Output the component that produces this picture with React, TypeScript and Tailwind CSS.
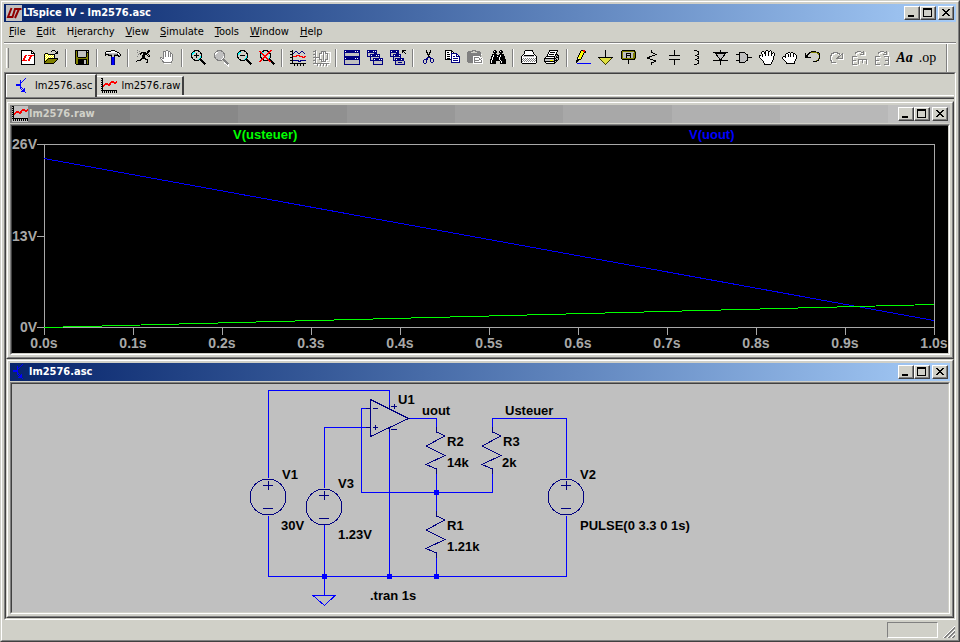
import { ReactNode } from 'react';

const palette: Record<string, string> = {
  k: '#000000',
  w: '#ffffff',
  g: '#808080',
  l: '#c0c0c0',
  r: '#ff0000',
  b: '#0000ff',
  n: '#000080',
  o: '#808000',
  y: '#ffff00',
  c: '#00ffff'
};

function Pixels({ rows }: { rows: string[] }) {
  return (
    <svg viewBox="0 0 16 16" className="block h-4 w-4 shrink-0" shapeRendering="crispEdges" aria-hidden="true">
      {rows.map((row, y) =>
        row.split('').map((ch, x) => (palette[ch] ? <rect key={`${x}-${y}`} x={x} y={y} width={1} height={1} fill={palette[ch]} /> : null))
      )}
    </svg>
  );
}

function Draw({ children }: { children: ReactNode }) {
  return (
    <svg viewBox="0 0 16 16" className="block h-4 w-4 shrink-0 overflow-visible" fill="none" stroke="#000" shapeRendering="crispEdges" aria-hidden="true">
      {children}
    </svg>
  );
}

const fileNew = [
  '.kkkkkkkkkkk....',
  '.kwwwwwwwwwkk...',
  '.kwwwwwwwwwkwk..',
  '.kwwwwwwwwwkkkk.',
  '.kwwwwwwwwwwwwk.',
  '.kwwwrrwrrrrrrk.',
  '.kwwrrwwwwrrwwk.',
  '.kwwrrwwwrrwwwk.',
  '.kwrrwwwwrrwwwk.',
  '.kwrrwwwrrwwwwk.',
  '.krrrrrwrrwwwwk.',
  '.kwwwwwwwwwwwwk.',
  '.kwwwwwwwwwwwwk.',
  '.kwwwwwwwwwwwwk.',
  '.kkkkkkkkkkkkkk.'
];

const fileOpen = [
  '.........kkk....',
  '........k...k.k.',
  '.............kk.',
  '..kkk.......kkk.',
  '.kywykkkkkkk....',
  '.kwywywywywk....',
  '.kywywywywyk....',
  '.kwywywywywk....',
  '.kywykkkkkkkkkk.',
  '.kwykoooooooook.',
  '.kykoooooooook..',
  '.kkoooooooook...',
  '.koooooooook....',
  '.kkkkkkkkkk.....'
];

const save = [
  '.kkkkkkkkkkkkkk.',
  '.kokllllllllklk.',
  '.kokllllllllkkk.',
  '.kokllllllllkok.',
  '.kokllllllllkok.',
  '.kokllllllllkok.',
  '.kokllllllllkok.',
  '.kookkkkkkkkook.',
  '.kooooooooooook.',
  '.kookkkkkkkkkok.',
  '.kookkkkkkllkok.',
  '.kookkkkkkllkok.',
  '.kookkkkkkllkok.',
  '.kookkkkkkllkok.',
  '..kkkkkkkkkkkkk.'
];

const hammer = [
  '......kkkk......',
  '.kkkkkwwwwkk....',
  'kwwwwwwwwwwwkk..',
  'kllllllllllllwk.',
  'kkkkgggllgggkwlk',
  'k..kkkkllkkkkklk',
  '......kllk...kk.',
  '......nbbn......',
  '......nbbn......',
  '......nbbn......',
  '......nbbn......',
  '......nbbn......',
  '......nbbn......',
  '......nbbn......',
  '......nbbn......'
];

const run = [
  '.g..........kk..',
  '...g.......kkk..',
  '.g...kkkkk.kk...',
  '...gkk.kkkkk....',
  '..g.k..kkkk.k...',
  '......kkk..k.k..',
  '.g....kkk...kk..',
  '......kkk.......',
  '.....kkkkk......',
  '....kk...kkk....',
  '.kkkk......k....',
  'k..........k....',
  '..........kk....'
];

const stop = [
  '.......gg.......',
  '....gggwwgg.....',
  '....gwgwwgwg....',
  '....gwgwwgwgg...',
  '....gwgwwgwgwg..',
  '....gwgwwgwgwg..',
  '....gwgwwgwgwg..',
  '.gg.gwwwwwwwwg..',
  '.gwggwwwwwwwwg..',
  '..gwwwwwwwwwwg..',
  '...gwwwwwwwwwg..',
  '...ggwwwwwwwg...',
  '....ggggggggg...',
  '.....wwwwwww....'
];

const cut = [
  '.....k...k......',
  '.....k...k......',
  '.....kk.kk......',
  '......k.k.......',
  '......kkk.......',
  '.......k........',
  '.......kk.......',
  '......nnnn......',
  '.....nn..nnn....',
  '...nnnn..n..n...',
  '..n..n...n..n...',
  '..n..n...n..n...',
  '..n..n....nn....',
  '...nn...........'
];

const copy = [
  '.kkkkkkk........',
  '.kwwwwwkk.......',
  '.kwkkwwkwk......',
  '.kwwwwwnnnnnn...',
  '.kwkkkwnwwwwnn..',
  '.kwwwwwnwwwwnwn.',
  '.kwkkkwnwnnwnnnn',
  '.kwwwwwnwwwwwwwn',
  '.kwkkkwnwnnnnnwn',
  '.kkkkkknwwwwwwwn',
  '.......nwnnnnnwn',
  '.......nwwwwwwwn',
  '.......nnnnnnnnn'
];

const paste = [
  '.....gggg.......',
  '.ggggg..ggggg...',
  'gggg......gggg..',
  'gggggggggggggg..',
  'ggggggggggggggw.',
  'gggggggggggggg..',
  'ggggggwwwwwwwg..',
  'ggggggwgggggwww.',
  'ggggggwgwwwwgwgw',
  'ggggggwgwwwwggww',
  'ggggggwgggggwwgw',
  'ggggggwgwwwwwwgw',
  '.gggggwggggggggw',
  '......wwwwwwwwww'
];

const find = [
  '....kk....kk....',
  '...kwkk..kwkk...',
  '...kkkk..kkkk...',
  '....kk....kk....',
  '..kkkkk..kkkkk..',
  '..kwkkkkkkwkkk..',
  '.kkwkkkwkkwkkkk.',
  '.kwkkkkkkwkkkkk.',
  '.kwkkkkkkwkkkkk.',
  'kkwkkkkkkwkkkkkk',
  'kwkkkkkkkkwkkkkk',
  'kwkkkk....kwkkkk',
  'kwkkkk....kwkkkk',
  'kkkkkk....kkkkkk'
];

const printSetup = [
  '....kkkkkkkk....',
  '...kwwwwwwwk....',
  '...kwwwwwwwwk...',
  '...kwwwwwwwwk...',
  '..kwwwwwwwwwwk..',
  '.kwkkkkkkkkkkwk.',
  'kwlllllllllllwwk',
  'kwwwwwwwwwwwwwwk',
  'kwgwgwgwgwgwgwgk',
  'kgwgwgwgwgwgwgwk',
  'kwgwgwgwgwgwgwgk',
  'kgwgwgwgwgwgwgwk',
  'kwwwwwwwwwwwwwwk',
  '.kkkkkkkkkkkkkk.'
];

const print = [
  '.....kkkkkkkkk..',
  '.....kwwwwwwwk..',
  '....kwkkkkkwk...',
  '....kwwwwwwwk...',
  '...kwkkkkkwkkk..',
  '...kwwwwwwwklkk.',
  '..kkkkkkkkklklk.',
  '.kwwwwwwwwklkkk.',
  'kkkkkkkkkkkkllk.',
  'klllllllllklklk.',
  'klllllyyylkkkk..',
  'kkkkkkkkkkklk...',
  '.kwwwwwwwwkk....',
  '..kkkkkkkkk.....'
];

const pencil = [
  '......kkrr......',
  '.....kyyrrk.....',
  '.....kyyykk.....',
  '....kyyyk.......',
  '....kyyyk.......',
  '...kyyyk........',
  '...kyyyk........',
  '..kyyyk.........',
  '..kwyyk.........',
  '..kkkk..........',
  '.kkk............',
  '.kk.............',
  '.k..............',
  '..bbbbbbbbbbbbbb'
];

const move = [
  '.......kk..k....',
  '...kk.kwwkkwk...',
  '..kwwkkwwkwwk.k.',
  '..kwwkkwwkwwkkwk',
  '...kwwkwwkwwkwwk',
  'kk.kwwkwwkwwkwwk',
  'kwwkwwwwwwwwwwk.',
  'kwwwwwwwwwwwwwk.',
  '.kwwwwwwwwwwwwk.',
  '..kwwwwwwwwwwwk.',
  '...kwwwwwwwwwk..',
  '....kwwwwwwwwk..',
  '....kwwwwwwwk...',
  '.....kwwwwwwk...',
  '.....kkkkkkk....'
];

const drag = [
  '................',
  '................',
  '......kk.kk.....',
  '....kkwwkwwkk...',
  '...kwwkwkwwkwk..',
  '...kwwkwkwwkwwk.',
  '.kkkwwkwkwwkwwk.',
  'kwwkwwwwwwwwwwk.',
  'kwwwwwwwwwwwwwk.',
  '.kwwwwwwwwwwwk..',
  '..kwwwwwwwwwwk..',
  '...kwwwwwwwwk...',
  '....kwwwwwwwk...',
  '....kkkkkkkkk...'
];

const label = [
  '.kkkkkkkkkkkkk..',
  'kooooooooooooko.',
  'kolllllllllllok.',
  'kolllkkkkkllook.',
  'kolllklllkllook.',
  'kolllkkkkkllook.',
  'kolllklllkllook.',
  'kolllklllkllook.',
  'kooooooooooooko.',
  '.kkkkkkkkkkkkk..',
  '.......k........',
  '.......k........',
  '.......k........',
  '.......k........'
];

const undo = [
  '................',
  '......kkkkk.....',
  '....kkooooookk..',
  'k..kk.......ook.',
  'k.kk.........ok.',
  'kkk...........k.',
  'kkk...........k.',
  'kkkkkk........k.',
  '.............ok.',
  '.............k..',
  '...........okk..',
  '........kkkk....',
  '................'
];

const plotIcon = [
  'kk..............',
  '.k..............',
  'kk..............',
  '.k........rrr..r',
  'kk.......rrrrrrr',
  '.k..rrr.rr...rr.',
  'kk.rrrrrrr......',
  '.krr...rr.......',
  'kkr.............',
  '.k..............',
  'kk..............',
  '.k..............',
  'kkkkkkkkkkkkkkkk',
  '.k.k.k.k.k.k.k.k',
  '.k.k.k.k.k.k.k.k'
];

const transistor = [
  '..........b.....',
  '.........b......',
  '.....b..b.......',
  '.....b.b........',
  '.....bb.........',
  '.....b..........',
  '.bbbbb..........',
  '.bbbbb..........',
  '.....b..........',
  '.....bb.........',
  '.....b.b.b......',
  '......b.bb......',
  '.......bbb......',
  '......bbbb......',
  '..........b.....'
];

const panes = [
  'nnnnnnnnnnnnnnnn',
  'nwnnnnnnnnnwnwnn',
  'nnnnnnnnnnnnnnnn',
  'nlllllllllllllln',
  'nlllllllllllllln',
  'nlllllllllllllln',
  'nnnnnnnnnnnnnnnn',
  'nnnnnnnnnnnnnnnn',
  'nwnnnnnnnnnwnwnn',
  'nnnnnnnnnnnnnnnn',
  'nlllllllllllllln',
  'nlllllllllllllln',
  'nlllllllllllllln',
  'nlllllllllllllln',
  'nnnnnnnnnnnnnnnn'
];

const cascade = [
  'nnnnnnnnnn......',
  'nwnnnnwnwn......',
  'nnnnnnnnnn......',
  'nllllllnnn......',
  'nllnnnnnnnnnn...',
  'nllnwnnnnwnwn...',
  'nnnnnnnnnnnnn...',
  '...nlllllllln...',
  '...nllnnnnnnnnnn',
  '...nllnwnnnnwnwn',
  '...nnnnnnnnnnnnn',
  '......nlllllllln',
  '......nlllllllln',
  '......nlllllllln',
  '......nnnnnnnnnn'
];

const closeAll = [
  'nnnnnnnnn...kkkk',
  'nwnnnnwnn...kk..',
  'nnnnnnnnn...k.k.',
  'nlllllnnn......k',
  'nllnnnnnnnn.....',
  'nllnwnnnnwn.....',
  'nnnnnnnnnnn.....',
  '...nlllllln.....',
  '...nlnnnnnnnnn..',
  '...nlnwnnnnwnn..',
  '...nnnnnnnnnnn..',
  '.....nlllllllln.',
  '.....nllnnnnlln.',
  '.....nlllllllln.',
  '.....nnnnnnnnnn.'
];

function Zoom({ kind }: { kind: 'in' | 'pan' | 'out' | 'fit' }) {
  const ink = kind === 'pan' ? '#808080' : '#000';
  return (
    <Draw>
      {kind === 'pan' && <path d="M11 12l5 4" stroke="#fff" strokeWidth="2" />}
      <circle cx="6.5" cy="5.5" r="5" stroke={ink} fill={kind === 'pan' ? '#c0c0c0' : 'none'} />
      <path d="M2.500 5V3.500H3.500V2.500H5M8 9.500H9.500V8.500H10.500V6" stroke={kind === 'pan' ? '#fff' : '#00ffff'} />
      {(kind === 'in' || kind === 'out') && <path d="M4 5.500H9" />}
      {kind === 'in' && <path d="M6.500 3V8" />}
      <path d="M10 9l5.500 5.500" stroke={ink} strokeWidth="2" />
      {kind === 'fit' && <path d="M1 1l10 11M12 0L1 12" stroke="#ff0000" strokeWidth="1.500" />}
    </Draw>
  );
}

function RotateGlyph({ mirror }: { mirror?: boolean }) {
  const e = mirror ? 'M1.500 6V15M1 6.500H6M1 10.500H5M1 14.500H6M14.500 6V15M10 6.500H15M11 10.500H15M10 14.500H15' : 'M1.500 6V15M1 6.500H6M1 10.500H5M1 14.500H6M7 9.500H16M7.500 9V14M11.500 9V13M15.500 9V14';
  return (
    <Draw>
      <path d={e} stroke="#fff" transform="translate(1 1)" />
      <path d="M4 4.500V2.500H6V1.500H10V2.500H12M9 4.500H13V1" stroke="#fff" transform="translate(1 1)" />
      <path d={e} stroke="#808080" />
      <path d="M4.500 4V2.500H6M6 1.500H10M10 2.500H12M9 4.500H12.500V1" stroke="#808080" />
    </Draw>
  );
}

const axes = 'M2.500 0V14M0 1.500H2M0 4.500H2M0 7.500H2M0 10.500H2M0 13.500H16M4.500 14V16M7.500 14V16M10.500 14V16M13.500 14V16';

type Tool = { label: string; icon: ReactNode };

const toolGroups: Tool[][] = [
  [
    { label: 'New Schematic', icon: <Pixels rows={fileNew} /> },
    { label: 'Open', icon: <Pixels rows={fileOpen} /> }
  ],
  [{ label: 'Save', icon: <Pixels rows={save} /> }],
  [{ label: 'Control Panel', icon: <Pixels rows={hammer} /> }],
  [
    { label: 'Run', icon: <Pixels rows={run} /> },
    { label: 'Halt', icon: <Pixels rows={stop} /> }
  ],
  [
    { label: 'Zoom In', icon: <Zoom kind="in" /> },
    { label: 'Pan', icon: <Zoom kind="pan" /> },
    { label: 'Zoom Out', icon: <Zoom kind="out" /> },
    { label: 'Zoom Full Extents', icon: <Zoom kind="fit" /> }
  ],
  [
    {
      label: 'Autorange',
      icon: (
        <Draw>
          <path d={axes} />
          <path d="M3 4l3-3 3 3 3-3 3 3M3 10.500H8V11.500H10V10.500H16" stroke="#000080" />
          <path d="M3 6.500H6V5.500H9V6.500H12V7.500H14V6.500H16" stroke="#ff0000" />
        </Draw>
      )
    },
    {
      label: 'Setup Traces',
      icon: (
        <Draw>
          <path d={axes} stroke="#fff" transform="translate(1 1)" />
          <path d={axes} stroke="#808080" />
          <path d="M6.500 3.500h2v-2h4v2h2v6h-2v2h-4v-2h-2zM3 7.500h4M10.500 2v9M13 1.500h3v10h-3" stroke="#fff" transform="translate(1 1)" />
          <path d="M6.500 3.500h2v-2h4v2h2v6h-2v2h-4v-2h-2zM3 7.500h4M10.500 2v9" stroke="#808080" />
        </Draw>
      )
    }
  ],
  [
    { label: 'Tile Windows', icon: <Pixels rows={panes} /> },
    { label: 'Cascade Windows', icon: <Pixels rows={cascade} /> },
    { label: 'Close All', icon: <Pixels rows={closeAll} /> }
  ],
  [
    { label: 'Cut', icon: <Pixels rows={cut} /> },
    { label: 'Copy', icon: <Pixels rows={copy} /> },
    { label: 'Paste', icon: <Pixels rows={paste} /> },
    { label: 'Find', icon: <Pixels rows={find} /> }
  ],
  [
    { label: 'Print Setup', icon: <Pixels rows={printSetup} /> },
    { label: 'Print', icon: <Pixels rows={print} /> }
  ],
  [
    { label: 'Wire', icon: <Pixels rows={pencil} /> },
    {
      label: 'Ground',
      icon: (
        <Draw>
          <path d="M7.500 0V7" />
          <path d="M1 7.500H14L7.500 14Z" fill="#e0e040" stroke="none" />
          <path d="M0 7.500H15" />
          <path d="M1 8l6.500 6.500L14 8" stroke="#404000" />
        </Draw>
      )
    },
    { label: 'Label Net', icon: <Pixels rows={label} /> },
    {
      label: 'Resistor',
      icon: (
        <Draw>
          <path d="M7.500 0V2L12 4.500L3 8L12 11L7.500 13V15" />
        </Draw>
      )
    },
    {
      label: 'Capacitor',
      icon: (
        <Draw>
          <path d="M7.500 0V6M7.500 9V15M2 5.500H13M2 9.500H13" />
        </Draw>
      )
    },
    {
      label: 'Inductor',
      icon: (
        <Draw>
          <path d="M4 0.500H7M7 1.500H8.500V4.500H7M5 5.500H7M7 6.500H8.500V8.500H7M5 9.500H7M7 10.500H8.500V13.500H7M4 14.500H7" />
        </Draw>
      )
    },
    {
      label: 'Diode',
      icon: (
        <Draw>
          <path d="M2 3L7.500 10L13 3Z" fill="#c0c0c0" />
          <path d="M7.500 0V3M7.500 11V15M0 2.500H15M0 10.500H15" />
        </Draw>
      )
    },
    {
      label: 'Component',
      icon: (
        <Draw>
          <path d="M0 4.500H3M0 10.500H3M12 7.500H16" />
          <path d="M3.500 2.500H8.500L11.500 5V10L8.500 12.500H3.500Z" fill="#c0c0c0" />
        </Draw>
      )
    },
    { label: 'Move', icon: <Pixels rows={move} /> },
    { label: 'Drag', icon: <Pixels rows={drag} /> },
    { label: 'Undo', icon: <Pixels rows={undo} /> },
    {
      label: 'Redo',
      icon: (
        <Draw>
          <path d="M12 6V4.500H10V3.500H6V4.500H4.500V6H3.500V10H4.500V13.500H9M15.500 4V9.500H10" stroke="#fff" />
          <path d="M11 5V3.500H9V2.500H5V3.500H3.500V5H2.500V10H3.500V12.500H8M14.500 3V8.500H9L14 4" stroke="#808080" />
        </Draw>
      )
    },
    { label: 'Rotate', icon: <RotateGlyph /> },
    { label: 'Mirror', icon: <RotateGlyph mirror /> },
    { label: 'Text', icon: <span className="font-['Liberation_Serif',serif] text-[14px] font-bold italic leading-4">Aa</span> },
    { label: 'SPICE Directive', icon: <span className="font-['Liberation_Serif',serif] text-[14px] leading-4">.op</span> }
  ]
];

const menus = [
  ['', 'F', 'ile'],
  ['', 'E', 'dit'],
  ['H', 'i', 'erarchy'],
  ['', 'V', 'iew'],
  ['', 'S', 'imulate'],
  ['', 'T', 'ools'],
  ['', 'W', 'indow'],
  ['', 'H', 'elp']
];

const raised = 'border border-t-white border-l-white border-r-[#404040] border-b-[#404040]';

function WindowButtons() {
  const cls = `flex h-[14px] w-4 items-center justify-center bg-[#d0d0c8] shadow-[inset_-1px_-1px_0_#808080] ${raised}`;
  return (
    <div className="ml-auto flex shrink-0">
      <button className={cls} aria-label="Minimize">
        <svg width="12" height="10" shapeRendering="crispEdges"><path d="M2 7H8V9H2Z" /></svg>
      </button>
      <button className={cls} aria-label="Maximize">
        <svg width="12" height="10" shapeRendering="crispEdges"><path d="M1 0H10V9H1ZM2 2V8H9V2Z" fillRule="evenodd" /></svg>
      </button>
      <button className={`${cls} ml-[2px]`} aria-label="Close">
        <svg width="12" height="10" shapeRendering="crispEdges"><path d="M2 1H4V2H5V3H7V2H8V1H10V2H9V3H8V4H7V5H8V6H9V7H10V8H8V7H7V6H5V7H4V8H2V7H3V6H4V5H5V4H4V3H3V2H2Z" /></svg>
      </button>
    </div>
  );
}

function ChildWindow({ title, icon, active, children }: { title: string; icon: ReactNode; active?: boolean; children: ReactNode }) {
  const bar = active
    ? 'bg-linear-to-r from-[#08246b] to-[#a5cbf7] text-white'
    : 'bg-[linear-gradient(90deg,#808080_12.8%,#888888_12.8%_24.3%,#909090_24.3%_35.8%,#989898_35.8%_47.3%,#a0a0a0_47.3%_58.8%,#a8a8a8_58.8%_70.4%,#b0b0b0_70.4%_81.9%,#b8b8b8_81.9%_93.4%,#c0c0c0_93.4%)] text-[#d0d0c8]';
  return (
    <section className="border border-t-[#d0d0c8] border-l-[#d0d0c8] border-r-[#404040] border-b-[#404040]">
      <div className="border border-t-white border-l-white border-r-[#808080] border-b-[#808080] p-[2px]">
        <header className={`flex h-[18px] items-center pr-[2px] pl-[2px] ${bar}`}>
          {icon}
          <h2 className="ml-px text-[11px] font-bold leading-4">{title}</h2>
          <WindowButtons />
        </header>
        <div className="mt-px border border-t-[#808080] border-l-[#808080] border-r-white border-b-white">
          <div className="border border-t-[#404040] border-l-[#404040] border-r-[#d0d0c8] border-b-[#d0d0c8]">{children}</div>
        </div>
      </div>
    </section>
  );
}

const timeTicks = [0, 1, 2, 3, 4, 5, 6, 7, 8, 9, 10];
const voltTicks = [
  { label: '26V', y: 144 },
  { label: '13V', y: 236 },
  { label: '0V', y: 327 }
];

function Plot() {
  return (
    <svg viewBox="12 126 936 227" className="block w-full bg-black font-['Liberation_Sans',Arial,sans-serif] font-bold" shapeRendering="crispEdges" fill="none">
      <rect x="44.500" y="144.500" width="890" height="183" stroke="#a8a8a8" />
      {voltTicks.map((t) => (
        <g key={t.label}>
          <path d={`M37 ${t.y + 0.5}H44`} stroke="#a8a8a8" />
          <text x="37" y={t.y + 5} textAnchor="end" fontSize="14" fill="#a8a8a8">{t.label}</text>
        </g>
      ))}
      {timeTicks.map((n) => (
        <g key={n}>
          <path d={`M${44.5 + n * 89} 328V335`} stroke="#a8a8a8" />
          <text x={44 + n * 89} y="348" textAnchor="middle" fontSize="14" fill="#a8a8a8">{(n / 10).toFixed(1)}s</text>
        </g>
      ))}
      <path d="M44 158.500L934 320.500" stroke="#0000ff" />
      <path d="M44 327.500L934 304.500" stroke="#00ff00" />
      <text x="233" y="139" fontSize="13" fill="#00ff00">V(usteuer)</text>
      <text x="689" y="139" fontSize="13" fill="#0000ff">V(uout)</text>
    </svg>
  );
}

function Resistor({ x, y }: { x: number; y: number }) {
  return <path transform={`translate(${x} ${y})`} d="M0.500 -5V0L9 4L-10 14L9 23.500L-10 32.500L0.500 37V42" />;
}

function Source({ x, y }: { x: number; y: number }) {
  return (
    <g transform={`translate(${x} ${y})`}>
      <circle cx="0" cy="1" r="18" />
      <path d="M-5 -10.500H5M0.500 -15V-6M-5 12.500H5" />
    </g>
  );
}

const parts = [
  { text: 'U1', x: 398, y: 404 },
  { text: 'uout', x: 422, y: 415 },
  { text: 'R2', x: 447, y: 446 },
  { text: '14k', x: 447, y: 467 },
  { text: 'Usteuer', x: 505, y: 415 },
  { text: 'R3', x: 503, y: 446 },
  { text: '2k', x: 502, y: 467 },
  { text: 'V1', x: 282, y: 479 },
  { text: '30V', x: 281, y: 530 },
  { text: 'V3', x: 338, y: 488 },
  { text: '1.23V', x: 338, y: 539 },
  { text: 'R1', x: 447, y: 530 },
  { text: '1.21k', x: 447, y: 551 },
  { text: 'V2', x: 580, y: 479 },
  { text: 'PULSE(0 3.3 0 1s)', x: 580, y: 530 },
  { text: '.tran 1s', x: 370, y: 600 }
];

const junctions = [
  [436, 492],
  [324, 576],
  [389, 576],
  [436, 576]
];

function Schematic() {
  return (
    <svg viewBox="12 384 936 228" className="block w-full bg-[#c0c0c0] font-['Liberation_Sans',Arial,sans-serif] font-bold" shapeRendering="crispEdges" fill="none">
      <g stroke="#0000ff">
        <path d="M268.500 478V390.500H389.500V405M268.500 516V576.500H566.500V516" />
        <path d="M324.500 488V427.500H366M324.500 525V595" />
        <path d="M366 408.500H361.500V492.500H492.500V470" />
        <path d="M389.500 432V576M408 418.500H436.500V428M436.500 472V512M436.500 557V576" />
        <path d="M492.500 428V418.500H566.500V478" />
        <path d="M313 595.500H335L324.500 605.500Z" />
      </g>
      <g stroke="#000080">
        <path d="M370.500 399.500V436.500L408.500 418.500Z" />
        <path d="M366 408.500H370M366 427.500H370M373 408.500H378M373 427.500H378M375.500 425V430" />
        <path d="M389.500 405V409M389.500 428V432M391 406.500H397M394.500 404V409M391 429.500H397" />
        <Resistor x={436} y={432} />
        <Resistor x={492} y={432} />
        <Resistor x={436} y={516} />
        <Source x={268} y={496} />
        <Source x={324} y={506} />
        <Source x={566} y={496} />
      </g>
      {junctions.map(([x, y]) => (
        <rect key={`${x}-${y}`} x={x - 2} y={y - 2} width="5" height="5" fill="#0000ff" />
      ))}
      {parts.map((p) => (
        <text key={p.text} x={p.x} y={p.y} fontSize="13" fill="#000">{p.text}</text>
      ))}
    </svg>
  );
}

export default function App() {
  return (
    <div className="flex min-h-screen flex-col border border-t-[#d0d0c8] border-l-[#d0d0c8] border-r-[#404040] border-b-[#404040] bg-[#d0d0c8] font-['DejaVu_Sans_Condensed','DejaVu_Sans',sans-serif] text-[11px] text-black">
      <div className="flex grow flex-col border border-t-white border-l-white border-r-[#808080] border-b-[#808080] p-[2px]">
        <header className="flex h-[18px] items-center bg-linear-to-r from-[#08246b] to-[#a5cbf7] px-[2px] text-white">
          <svg viewBox="0 0 16 16" className="block h-4 w-4 shrink-0 bg-[#c0c0c0]" aria-hidden="true">
            <path d="M5.500 3L2 12H6.500L9 4H15.500M13 4L9 13" fill="none" stroke="#900000" strokeWidth="2" />
          </svg>
          <h1 className="ml-px text-[11px] font-bold leading-4">LTspice IV - lm2576.asc</h1>
          <WindowButtons />
        </header>

        <nav className="flex h-5 items-center gap-px">
          {menus.map(([pre, key, post]) => (
            <button key={key + post} className="px-[5px] leading-4">
              {pre}<u>{key}</u>{post}
            </button>
          ))}
        </nav>

        <div className="flex h-[30px] items-center border-t border-[#808080] pl-[2px] shadow-[inset_0_1px_0_#ffffff]">
          <div className="mr-[7px] h-5 w-[3px] border-r border-l border-r-[#808080] border-l-white" />
          {toolGroups.map((group, i) => (
            <div key={i} className="flex items-center">
              {i > 0 && <div className="mx-[3px] h-[18px] w-[2px] border-r border-l border-r-white border-l-[#808080]" />}
              {group.map((tool) => (
                <button key={tool.label} aria-label={tool.label} className="flex h-[22px] w-[23px] items-center justify-center">
                  {tool.icon}
                </button>
              ))}
            </div>
          ))}
          <div className="mr-2 ml-auto h-7 w-[2px] border-r border-l border-r-white border-l-[#808080]" />
        </div>

        <div className="flex grow flex-col border border-t-[#808080] border-l-[#808080] border-r-white border-b-white">
          <div className="flex grow flex-col border border-t-[#404040] border-l-[#404040] border-r-[#d0d0c8] border-b-[#d0d0c8]">
            <div className="flex h-[23px] items-start">
              <button className="flex h-[23px] items-center border-t border-r-2 border-l border-t-white border-r-[#404040] border-l-white pr-[3px] pl-2">
                <Pixels rows={transistor} />
                <span className="ml-1 leading-4">lm2576.asc</span>
              </button>
              <div className="flex h-[22px] grow items-end border-b border-white">
                <button className="flex h-[19px] items-center border-t border-r-2 border-t-white border-r-[#404040] pr-[2px] pl-1">
                  <Pixels rows={plotIcon} />
                  <span className="ml-1 leading-4">lm2576.raw</span>
                </button>
              </div>
            </div>
            <main className="border-t border-[#808080]">
              <div className="border-t border-[#404040] pt-[2px]">
                <ChildWindow title="lm2576.raw" icon={<span className="bg-[#c0c0c0]"><Pixels rows={plotIcon} /></span>}>
                  <Plot />
                </ChildWindow>
                <ChildWindow title="lm2576.asc" icon={<Pixels rows={transistor} />} active>
                  <Schematic />
                </ChildWindow>
              </div>
            </main>
          </div>
        </div>

        <footer className="flex h-[18px] items-end justify-end gap-[5px] pr-px">
          <div className="h-4 w-[51px] border border-t-[#808080] border-l-[#808080] border-r-white border-b-white" />
          <svg viewBox="0 0 12 12" className="block h-3 w-3" shapeRendering="crispEdges" aria-hidden="true">
            <path d="M0 12L12 0M4 12L12 4M8 12L12 8" stroke="#fff" />
            <path d="M1 12L12 1M2 12L12 2M5 12L12 5M6 12L12 6M9 12L12 9M10 12L12 10" stroke="#808080" />
          </svg>
        </footer>
      </div>
    </div>
  );
}
